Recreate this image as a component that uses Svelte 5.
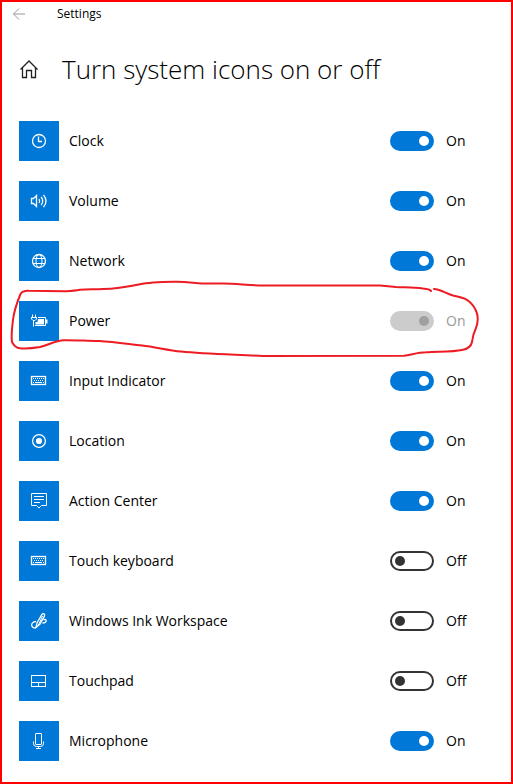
<script lang="ts">
	interface Item {
		id: string;
		label: string;
		on: boolean;
		disabled?: boolean;
	}

	let items = $state<Item[]>([
		{ id: 'clock', label: 'Clock', on: true },
		{ id: 'volume', label: 'Volume', on: true },
		{ id: 'network', label: 'Network', on: true },
		{ id: 'power', label: 'Power', on: true, disabled: true },
		{ id: 'input', label: 'Input Indicator', on: true },
		{ id: 'location', label: 'Location', on: true },
		{ id: 'action', label: 'Action Center', on: true },
		{ id: 'keyboard', label: 'Touch keyboard', on: false },
		{ id: 'ink', label: 'Windows Ink Workspace', on: false },
		{ id: 'touchpad', label: 'Touchpad', on: false },
		{ id: 'microphone', label: 'Microphone', on: true }
	]);
</script>

{#snippet icon(id: string)}
	<svg class="icon" viewBox="0 0 40 40" aria-hidden="true">
		{#if id === 'clock'}
			<circle class="ring" cx="20" cy="20" r="6.5" />
			<path class="ring" d="M19.5 15.5v5H23" />
		{:else if id === 'volume'}
			<path class="ring" d="M12.5 17.5h2l3-3v11l-3-3h-2z" />
			<path class="ring" d="M20 18q1.4 2 0 4M22.2 16q3 4 0 8M24.5 13.8q5 6.2 0 12.4" />
		{:else if id === 'network'}
			<circle class="ring" cx="20" cy="20" r="6.5" />
			<ellipse cx="20" cy="20" rx="3" ry="6.5" />
			<path d="M14 17.5h12M14 22.5h12" />
		{:else if id === 'power'}
			<path d="M13.5 13.5v3M16.5 13.5v3M12 16.5h6M12.5 16.5v1.5l1.5 1.500h2l1.500-1.500v-1.500M14.5 19.5v6" />
			<path d="M19 16.5h7.5v8H16" />
			<path class="solid" d="M19 18h6v5.5h-8.500v-2.500h2zM27 18.500h1.500v4H27z" />
		{:else if id === 'input' || id === 'keyboard'}
			<rect class="ring" x="12.5" y="15.5" width="14" height="8" />
			<path class="keys" d="M14 17.5h11M15 19.5h10" />
			<path d="M14 21.5h1M16 21.5h7M24 21.5h1" />
		{:else if id === 'location'}
			<circle class="ring" cx="20" cy="20" r="6.4" />
			<circle class="solid" cx="20" cy="20" r="3.1" />
		{:else if id === 'action'}
			<path d="M12.5 12.5h15v12h-5L20 27l-2.5-2.5h-5z" />
			<path d="M15 15.5h10M15 18.5h10M15 21.5h6" />
		{:else if id === 'ink'}
			<path class="ring" d="M17 26.5l1-4.5 4.8-8.4q1-1.4 2.2-.7t.4 2.2L21 23z" />
			<path d="M23.5 15l-4 9" />
			<path
				class="ring"
				d="M17 20.5c-3 0-5 2.2-4.200 4.300.8 2.500 3.200 2.200 4.200 1.700M24.500 19c1.500-1.200 2.800-.3 2.700 1-.2 1.500-1.700 2-3.700 2"
			/>
		{:else if id === 'touchpad'}
			<rect x="12.5" y="14.5" width="14" height="11" />
			<path d="M12.5 21.5h14M19.5 21.5v4" />
		{:else if id === 'microphone'}
			<rect x="16.5" y="12.5" width="6" height="11" rx="0.5" />
			<path d="M14.5 20.5v2q0 3 3 3h4q3 0 3-3v-2M19.5 25.5v2M17 27.5h5" />
		{/if}
	</svg>
{/snippet}

<main class="window">
	<nav class="titlebar">
		<button class="back" aria-label="Back" disabled>
			<svg viewBox="0 0 14 14" aria-hidden="true">
				<path d="M13 7H1.5M7 1.5L1.5 7 7 12.5" />
			</svg>
		</button>
		<span>Settings</span>
	</nav>

	<header class="heading">
		<a class="home" href="#home" aria-label="Home">
			<svg viewBox="0 0 20 20" aria-hidden="true">
				<path d="M1.5 10.5L10 2l8.5 8.5M3.5 9v9.5h4v-7h5v7h4V9" />
			</svg>
		</a>
		<h1>Turn system icons on or off</h1>
	</header>

	<ul class="list">
		{#each items as item (item.id)}
			<li class="row">
				<span class="tile">{@render icon(item.id)}</span>
				<label class="name" for={item.id}>{item.label}</label>
				<input
					id={item.id}
					class="toggle"
					type="checkbox"
					role="switch"
					disabled={item.disabled}
					bind:checked={item.on}
				/>
				<span class="state" class:muted={item.disabled}>{item.on ? 'On' : 'Off'}</span>

				{#if item.id === 'power'}
					<!-- hand-drawn loop round the unavailable setting -->
					<svg class="marker" viewBox="10 280 470 78" preserveAspectRatio="none" aria-hidden="true">
						<path
							d="M431 291C430 289 427 289 423 288.5C413 287 405 287.5 396 287L380 285.5H262C248 285.5 237 283.5 223 283.5H202C193 283 186 281.5 174 281.8C160 282 148 282.5 140 284.3C127 287 116 289 103 289C94 289.5 87 289 80 289.8C74 291 70 291 64 291.2L29 290.8C24 290.5 22 291.5 20.5 294C16 305 14 311 13 320C12 328 11 335 12 342C14 346 16 348 20 348.3C27 349 34 348 40 347C49 345 55 340.5 64 340.2C76 340 87 341 99 341C115 342 128 344 142 345.5C156 347 168 350.5 181 351.5C206 354 236 354.5 263 356C303 355.5 350 355.8 404 355.7C411 355 417 352.5 426 352.3C439 351.5 453 352 462 350C468 349 471 347 472 342C473 334 474 332 476 328C479 320 478.5 314 474 307C468 298 461 297 453 295.5C445 293 441 289.5 434 289"
						/>
					</svg>
				{/if}
			</li>
		{/each}
	</ul>
</main>

<style>
	:global(body) {
		margin: 0;
		background: #fff;
	}
	.window {
		box-sizing: border-box;
		border: 2px solid #f00;
		padding-bottom: 21px;
		color: #000;
		font-family: 'Segoe UI', 'Open Sans', sans-serif;
		font-size: 14px;
		line-height: 20px;
	}
	.titlebar {
		display: flex;
		align-items: center;
		gap: 31px;
		height: 23px;
		padding-left: 10px;
		font-size: 12px;
	}
	.back {
		display: flex;
		padding: 0;
		border: 0;
		background: none;
	}
	.back svg {
		width: 14px;
		height: 14px;
		fill: none;
		stroke: #999;
	}
	.heading {
		display: flex;
		align-items: center;
		gap: 23px;
		padding: 24px 17px 32px;
	}
	.home {
		display: flex;
		color: #222;
	}
	.home svg {
		width: 20px;
		height: 20px;
		fill: none;
		stroke: currentColor;
		stroke-width: 1.3;
	}
	h1 {
		margin: 0;
		font-size: 26px;
		font-weight: 300;
		line-height: 40px;
	}
	.list {
		display: flex;
		flex-direction: column;
		gap: 20px;
		margin: 0;
		padding: 0 41px 0 17px;
		list-style: none;
	}
	.row {
		position: relative;
		display: grid;
		grid-template-columns: 40px 1fr 44px 36px;
		align-items: center;
	}
	.tile {
		height: 40px;
		background: #0078d7;
	}
	.icon {
		display: block;
		width: 40px;
		height: 40px;
		fill: none;
		stroke: #fff;
	}
	.solid {
		fill: #fff;
		stroke: none;
	}
	.ring {
		stroke-width: 1.3;
	}
	.keys {
		stroke-dasharray: 1 1;
	}
	.name {
		padding-left: 10px;
	}
	.toggle {
		appearance: none;
		display: flex;
		align-items: center;
		box-sizing: border-box;
		width: 44px;
		height: 20px;
		margin: 0;
		padding: 0 3px;
		border: 2px solid #333;
		border-radius: 10px;
		color: #333;
	}
	.toggle::before {
		content: '';
		width: 10px;
		height: 10px;
		border-radius: 50%;
		background: currentColor;
	}
	.toggle:checked {
		justify-content: flex-end;
		border-color: #0078d7;
		background: #0078d7;
		color: #fff;
	}
	.toggle:disabled {
		border-color: #ccc;
		background: #ccc;
		color: #a0a0a0;
	}
	.state {
		padding-left: 12px;
	}
	.muted {
		color: #999;
	}
	.marker {
		position: absolute;
		top: -21px;
		left: -9px;
		width: calc(100% + 19px);
		height: 78px;
		fill: none;
		stroke: #ed1c24;
		stroke-width: 2;
		stroke-linecap: round;
		pointer-events: none;
	}
</style>
